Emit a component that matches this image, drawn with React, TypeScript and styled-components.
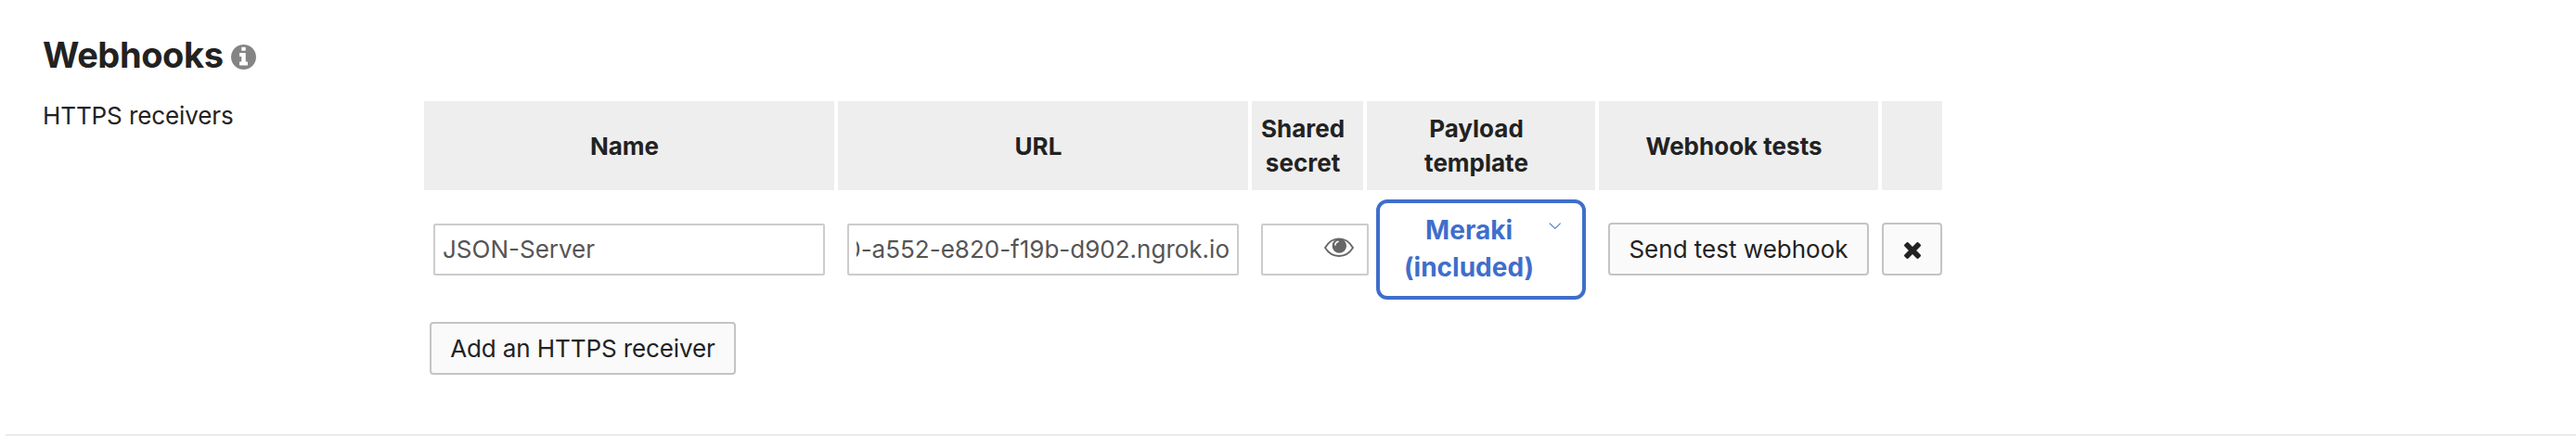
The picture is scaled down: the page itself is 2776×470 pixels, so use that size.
import React from "react";
import styled, { createGlobalStyle } from "styled-components";

const GlobalStyle = createGlobalStyle`
  * { box-sizing: border-box; }
  body {
    margin: 0;
    background: #fff;
    color: #222;
    font-family: Inter, "Liberation Sans", sans-serif;
    font-size: 26px;
    line-height: 38px;
  }
`;

const Page = styled.main`
  height: 470px;
  padding: 37px 0 0 6px;
  display: flex;
  flex-direction: column;
  overflow: hidden;
`;

const Heading = styled.header`
  display: flex;
  align-items: center;
  gap: 8px;
  height: 44px;
  padding-left: 40px;
`;

const Title = styled.h2`
  margin: 0;
  font-size: 38px;
  font-weight: 700;
  line-height: 44px;
  letter-spacing: -0.4px;
`;

const InfoIcon = styled.svg`
  width: 27px;
  height: 27px;
  margin-top: 5px;
`;

const Section = styled.section`
  display: flex;
  flex: 1;
  margin-top: 24px;
  padding-left: 40px;
  padding-top: 4px;
  border-bottom: 2px solid #ebebeb;
`;

const SectionLabel = styled.div`
  width: 411px;
  line-height: 31px;
  letter-spacing: -0.1px;
`;

const Receivers = styled.div`
  display: flex;
  flex-direction: column;
  align-items: flex-start;
`;

const Row = styled.div`
  display: grid;
  grid-template-columns: 442px 442px 120px 246px 301px 65px;
  column-gap: 4px;
`;

const HeaderCell = styled.div`
  display: flex;
  align-items: center;
  justify-content: center;
  height: 96px;
  padding: 0 20px 0 10px;
  background: #eee;
  font-weight: 700;
  line-height: 37px;
  text-align: center;
`;

const HeaderText = styled.span<{ $width: string }>`
  width: ${(p) => p.$width};
`;

const Cell = styled.div<{ $flush?: boolean }>`
  display: flex;
  align-items: center;
  height: 127px;
  padding: ${(p) => (p.$flush ? "0" : "0 10px")};
`;

const Field = styled.div<{ $end?: boolean }>`
  display: flex;
  flex: none;
  align-items: center;
  justify-content: ${(p) => (p.$end ? "flex-end" : "flex-start")};
  width: 422px;
  height: 56px;
  margin-top: 1px;
  padding: 0 8px;
  border: 2px solid #ccc;
  border-radius: 2px;
  background: #fff;
  color: #555;
`;

const FieldText = styled.span`
  display: flex;
  justify-content: inherit;
  width: 100%;
  overflow: hidden;
  white-space: nowrap;
`;

const SecretField = styled(Field)`
  width: 116px;
  padding: 0 14px 4px 8px;
`;

const Button = styled.button<{ $width: number }>`
  display: flex;
  flex: none;
  align-items: center;
  justify-content: center;
  width: ${(p) => p.$width}px;
  height: 57px;
  padding: 0;
  border: 2px solid #c4c4c4;
  border-radius: 4px;
  background: #fafafa;
  color: #222;
  font: inherit;
  white-space: nowrap;
`;

const TemplateSelect = styled.button`
  display: flex;
  flex: none;
  width: 226px;
  height: 108px;
  margin-top: 1px;
  padding: 9px 23px 0 26px;
  border: 4px solid #3f6ecb;
  border-radius: 12px;
  background: #fff;
  color: #3f6ecb;
  font: 700 28px/40px Inter, "Liberation Sans", sans-serif;
  justify-content: space-between;
`;

const Chevron = styled.svg`
  width: 13px;
  height: 8px;
  margin-top: 12px;
`;

const RemoveIcon = styled.svg`
  width: 18px;
  height: 18px;
  margin-top: 2px;
`;

const AddButton = styled(Button)`
  margin: 15px 0 0 6px;
  letter-spacing: -0.1px;
`;

const columns = [
  { name: "Name", width: "auto" },
  { name: "URL", width: "auto" },
  { name: "Shared secret", width: "90px" },
  { name: "Payload template", width: "130px" },
  { name: "Webhook tests", width: "auto" },
  { name: "", width: "auto" },
];

export default function App() {
  return (
    <>
      <GlobalStyle />
      <Page>
        <Heading>
          <Title>Webhooks</Title>
          <InfoIcon viewBox="0 0 1536 1536" fill="#848484">
            <path d="M1024 1248v-160q0-14-9-23t-23-9h-96V544q0-14-9-23t-23-9H544q-14 0-23 9t-9 23v160q0 14 9 23t23 9h96v320h-96q-14 0-23 9t-9 23v160q0 14 9 23t23 9h448q14 0 23-9t9-23zM896 352V192q0-14-9-23t-23-9H672q-14 0-23 9t-9 23v160q0 14 9 23t23 9h192q14 0 23-9t9-23zM1536 768q0 209-103 385.500T1153.500 1433 768 1536t-385.500-103T103 1153.500 0 768t103-385.500T382.500 103 768 0t385.500 103T1433 382.500 1536 768z" />
          </InfoIcon>
        </Heading>
        <Section>
          <SectionLabel>HTTPS receivers</SectionLabel>
          <Receivers>
            <Row>
              {columns.map(({ name, width }) => (
                <HeaderCell key={name}>
                  <HeaderText $width={width}>{name}</HeaderText>
                </HeaderCell>
              ))}
            </Row>
            <Row>
              <Cell>
                <Field>JSON-Server</Field>
              </Cell>
              <Cell>
                <Field $end>
                  <FieldText>0-a552-e820-f19b-d902.ngrok.io</FieldText>
                </Field>
              </Cell>
              <Cell>
                <SecretField $end>
                  <svg width="32" height="22" viewBox="0 0 32 22">
                    <path d="M1 11C5 4 10 1.300 16 1.300S27 4 31 11C27 17.500 22 20 16 20S5 17.500 1 11Z" fill="none" stroke="#666" strokeWidth="1.800" />
                    <circle cx="16.300" cy="9" r="7.700" fill="#666" />
                    <path d="M11.800 8.600Q12 4.900 15.600 4.300" fill="none" stroke="#fff" strokeWidth="1.500" />
                  </svg>
                </SecretField>
              </Cell>
              <Cell>
                <TemplateSelect>
                  <span>
                    Meraki
                    <br />
                    (included)
                  </span>
                  <Chevron viewBox="0 0 13 8" fill="none" stroke="#3f6ecb" strokeWidth="1.100">
                    <path d="M.8.600 6.800 6.300 12.700.600" />
                  </Chevron>
                </TemplateSelect>
              </Cell>
              <Cell>
                <Button $width={281}>Send test webhook</Button>
              </Cell>
              <Cell $flush>
                <Button $width={65} aria-label="Remove receiver">
                  <RemoveIcon viewBox="110 366 1188 1188" fill="#222">
                    <path d="M1298 1322q0 40-28 68l-136 136q-28 28-68 28t-68-28L704 1232 410 1526q-28 28-68 28t-68-28l-136-136q-28-28-28-68t28-68L432 960 138 666q-28-28-28-68t28-68l136-136q28-28 68-28t68 28L704 688l294-294q28-28 68-28t68 28l136 136q28 28 28 68t-28 68L976 960l294 294q28 28 28 68z" />
                  </RemoveIcon>
                </Button>
              </Cell>
            </Row>
            <AddButton $width={330}>Add an HTTPS receiver</AddButton>
          </Receivers>
        </Section>
      </Page>
    </>
  );
}
